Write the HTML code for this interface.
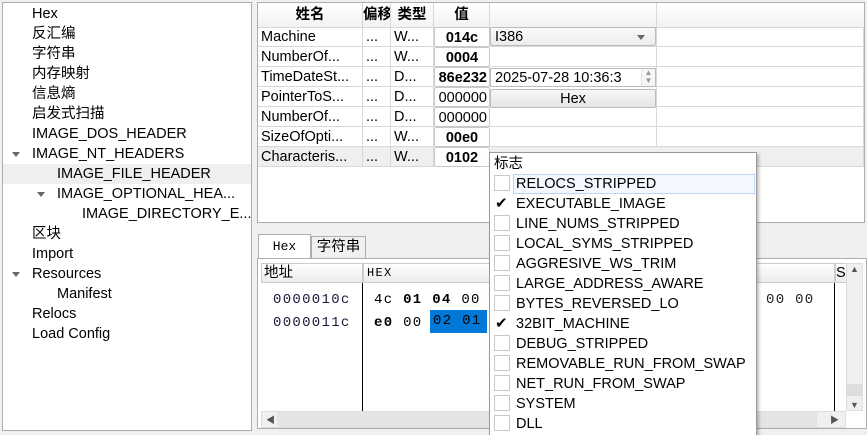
<!DOCTYPE html>
<html><head><meta charset="utf-8"><style>
*{box-sizing:border-box;margin:0;padding:0}
html{overflow:hidden;width:867px;height:435px}
body{width:867px;height:435px;background:#f0f0f0;position:relative;overflow:hidden;font-family:"Segoe UI","Liberation Sans","Noto Sans CJK SC",sans-serif;font-size:14.5px;color:#000}
.a{position:absolute}
.tree{left:2px;top:2px;width:250px;height:429px;background:#fff;border:1px solid #adadad}
.ti{position:absolute;height:20px;line-height:20px;white-space:nowrap}
.arr{position:absolute;width:0;height:0;border-left:4px solid transparent;border-right:4px solid transparent;border-top:5px solid #666}
.tbl{left:257px;top:2px;width:608px;height:221px;background:#fff;border:1px solid #adadad;overflow:hidden}
.c{position:absolute;height:20px;line-height:21px;border-right:1px solid #d8d8d8;border-bottom:1px solid #d8d8d8;white-space:nowrap;overflow:hidden;padding-left:3px}
.h{background:linear-gradient(#fff,#f2f2f2);font-weight:bold;text-align:center;padding:0;line-height:24px;height:25px}
.val{font-weight:bold;text-align:center;padding:0;background:#fff;border:1px solid #c8c8c8;border-radius:2px}
.btn{position:absolute;background:linear-gradient(#f6f6f6,#e6e6e6);border:1px solid #bbb;border-radius:2px;height:19px;line-height:19px}
.mono{font-family:"Liberation Mono",monospace;font-size:14px;letter-spacing:1.3px}
.pop{left:489px;top:152px;width:268px;height:284px;background:#fff;border:1px solid #999;border-bottom:none;box-shadow:2px 2px 3px rgba(0,0,0,.25)}
.cb{position:absolute;left:4px;width:16px;height:16px;border:1px solid #c8c8c8;background:#fff}
.ck{position:absolute;left:5px;font-size:15px;line-height:16px}
.pl{position:absolute;left:26px;height:20px;line-height:22px;white-space:nowrap}
</style></head><body>
<div class="a tree">
<div class="ti" style="left:29px;top:1px">Hex</div>
<div class="ti" style="left:29px;top:21px">反汇编</div>
<div class="ti" style="left:29px;top:41px">字符串</div>
<div class="ti" style="left:29px;top:61px">内存映射</div>
<div class="ti" style="left:29px;top:81px">信息熵</div>
<div class="ti" style="left:29px;top:101px">启发式扫描</div>
<div class="ti" style="left:29px;top:121px">IMAGE_DOS_HEADER</div>
<div class="arr" style="left:9px;top:149px"></div>
<div class="ti" style="left:29px;top:141px">IMAGE_NT_HEADERS</div>
<div class="a" style="left:0;top:161px;width:248px;height:20px;background:#efefef"></div>
<div class="ti" style="left:54px;top:161px">IMAGE_FILE_HEADER</div>
<div class="arr" style="left:34px;top:189px"></div>
<div class="ti" style="left:54px;top:181px">IMAGE_OPTIONAL_HEA...</div>
<div class="ti" style="left:79px;top:201px">IMAGE_DIRECTORY_E...</div>
<div class="ti" style="left:29px;top:221px">区块</div>
<div class="ti" style="left:29px;top:241px">Import</div>
<div class="arr" style="left:9px;top:269px"></div>
<div class="ti" style="left:29px;top:261px">Resources</div>
<div class="ti" style="left:54px;top:281px">Manifest</div>
<div class="ti" style="left:29px;top:301px">Relocs</div>
<div class="ti" style="left:29px;top:321px">Load Config</div>
</div>

<div class="a tbl">
<div class="c h" style="left:0;top:0;width:105px">姓名</div>
<div class="c h" style="left:105px;top:0;width:28px;text-align:left">偏移</div>
<div class="c h" style="left:133px;top:0;width:43px">类型</div>
<div class="c h" style="left:176px;top:0;width:56px">值</div>
<div class="c h" style="left:232px;top:0;width:167px"></div>
<div class="c h" style="left:399px;top:0;width:210px"></div>
</div>
<div class="a" style="left:258px;top:27px;width:606px">
<div class="c" style="left:0;top:0;width:105px">Machine</div><div class="c" style="left:105px;top:0;width:28px">...</div><div class="c" style="left:133px;top:0;width:43px">W...</div><div class="c val" style="left:176px;top:0;width:56px">014c</div><div class="c" style="left:232px;top:0;width:167px"></div><div class="c" style="left:399px;top:0;width:207px"></div>
<div class="c" style="left:0;top:20px;width:105px">NumberOf...</div><div class="c" style="left:105px;top:20px;width:28px">...</div><div class="c" style="left:133px;top:20px;width:43px">W...</div><div class="c val" style="left:176px;top:20px;width:56px">0004</div><div class="c" style="left:232px;top:20px;width:167px"></div><div class="c" style="left:399px;top:20px;width:207px"></div>
<div class="c" style="left:0;top:40px;width:105px">TimeDateSt...</div><div class="c" style="left:105px;top:40px;width:28px">...</div><div class="c" style="left:133px;top:40px;width:43px">D...</div><div class="c val" style="left:176px;top:40px;width:56px;text-align:right;padding-right:2px">86e232</div><div class="c" style="left:232px;top:40px;width:167px"></div><div class="c" style="left:399px;top:40px;width:207px"></div>
<div class="c" style="left:0;top:60px;width:105px">PointerToS...</div><div class="c" style="left:105px;top:60px;width:28px">...</div><div class="c" style="left:133px;top:60px;width:43px">D...</div><div class="c val" style="left:176px;top:60px;width:56px;font-weight:normal;text-align:right;padding-right:2px">000000</div><div class="c" style="left:232px;top:60px;width:167px"></div><div class="c" style="left:399px;top:60px;width:207px"></div>
<div class="c" style="left:0;top:80px;width:105px">NumberOf...</div><div class="c" style="left:105px;top:80px;width:28px">...</div><div class="c" style="left:133px;top:80px;width:43px">D...</div><div class="c val" style="left:176px;top:80px;width:56px;font-weight:normal;text-align:right;padding-right:2px">000000</div><div class="c" style="left:232px;top:80px;width:167px"></div><div class="c" style="left:399px;top:80px;width:207px"></div>
<div class="c" style="left:0;top:100px;width:105px">SizeOfOpti...</div><div class="c" style="left:105px;top:100px;width:28px">...</div><div class="c" style="left:133px;top:100px;width:43px">W...</div><div class="c val" style="left:176px;top:100px;width:56px">00e0</div><div class="c" style="left:232px;top:100px;width:167px"></div><div class="c" style="left:399px;top:100px;width:207px"></div>
<div class="c" style="left:0;top:120px;width:105px;background:#efefef">Characteris...</div><div class="c" style="left:105px;top:120px;width:28px;background:#efefef">...</div><div class="c" style="left:133px;top:120px;width:43px;background:#efefef">W...</div><div class="c val" style="left:176px;top:120px;width:56px">0102</div><div class="c" style="left:232px;top:120px;width:374px;background:#efefef"></div>
</div>
<div class="btn" style="left:490px;top:27px;width:166px;padding-left:4px;background:linear-gradient(#fafafa,#ececec)">I386<span class="arr" style="left:146px;top:7px"></span></div>
<div class="a" style="left:490px;top:68px;width:166px;height:19px;background:#fff;border:1px solid #bbb;line-height:18px;padding-left:4px;overflow:hidden;white-space:nowrap">2025-07-28 10:36:3<span style="position:absolute;right:0;top:0;width:14px;height:17px;background:#f6f6f6;border-left:1px solid #ddd;color:#999;font-size:8px;line-height:8px;text-align:center">▲<br>▼</span></div>
<div class="btn" style="left:490px;top:89px;width:166px;text-align:center">Hex</div>

<!-- tabs -->
<div class="a" style="left:258px;top:234px;width:53px;height:25px;background:#fff;border:1px solid #adadad;border-bottom:none;text-align:center;line-height:24px;font-family:'Liberation Mono',monospace;font-size:13px">Hex</div>
<div class="a" style="left:311px;top:236px;width:55px;height:22px;background:#f0f0f0;border:1px solid #adadad;border-bottom:none;text-align:center;line-height:21px">字符串</div>
<div class="a" style="left:257px;top:258px;width:610px;height:171px;background:#fff;border:1px solid #adadad">
<div class="a" style="left:3px;top:4px;width:102px;height:20px;background:linear-gradient(#fff,#ececec);border:1px solid #ccc;line-height:18px;padding-left:2px">地址</div>
<div class="a mono" style="left:105px;top:4px;width:472px;height:20px;background:linear-gradient(#fff,#ececec);border:1px solid #ccc;line-height:18px;padding-left:3px;font-size:12px">HEX</div>
<div class="a" style="left:577px;top:4px;width:12px;height:20px;background:linear-gradient(#fff,#ececec);border:1px solid #ccc;line-height:18px;overflow:hidden">S</div>
<div class="a" style="left:104px;top:24px;width:1px;height:128px;background:#000"></div>
<div class="a" style="left:576px;top:24px;width:1px;height:128px;background:#000"></div>
<div class="a mono" style="left:15px;top:33px;color:#1a1a3a">0000010c</div>
<div class="a mono" style="left:15px;top:56px;color:#1a1a3a">0000011c</div>
<div class="a mono" style="left:116px;top:33px">4c <b>01</b> <b>04</b> 00 3</div>
<div class="a mono" style="left:116px;top:56px"><b>e0</b> 00 </div>
<div class="a mono" style="left:172px;top:51px;width:57px;height:23px;background:#0078d7;line-height:23px;padding-left:3px">02 01</div>
<div class="a mono" style="left:508px;top:33px;color:#222">00 00</div>
<div class="a" style="left:588px;top:4px;width:17px;height:148px;background:#f0f0f0;border:1px solid #ddd"><div style="text-align:center;font-size:9px;color:#555">▲</div><div style="position:absolute;bottom:14px;left:0;width:15px;height:12px;background:#ddd"></div><div style="position:absolute;bottom:0;width:15px;text-align:center;font-size:9px;color:#555">▼</div></div>
<div class="a" style="left:3px;top:152px;width:585px;height:17px;background:#f0f0f0;border:1px solid #ddd"><span style="position:absolute;left:4px;top:1px;font-size:9px;color:#555">◀</span><div style="position:absolute;left:15px;top:0;width:540px;height:15px;background:#e4e4e4"></div><span style="position:absolute;right:6px;top:1px;font-size:9px;color:#555">▶</span></div>
</div>

<!-- popup -->
<div class="a pop">
<div class="pl" style="left:4px;top:0">标志</div>
<div class="a" style="left:23px;top:21px;width:242px;height:20px;border:1px solid #b8d8f5;background:#f3f9ff"></div>
<div class="cb" style="top:22px"></div><div class="pl" style="top:20px">RELOCS_STRIPPED</div>
<div class="ck" style="top:43px">✔</div><div class="pl" style="top:40px">EXECUTABLE_IMAGE</div>
<div class="cb" style="top:62px"></div><div class="pl" style="top:60px">LINE_NUMS_STRIPPED</div>
<div class="cb" style="top:82px"></div><div class="pl" style="top:80px">LOCAL_SYMS_STRIPPED</div>
<div class="cb" style="top:102px"></div><div class="pl" style="top:100px">AGGRESIVE_WS_TRIM</div>
<div class="cb" style="top:122px"></div><div class="pl" style="top:120px">LARGE_ADDRESS_AWARE</div>
<div class="cb" style="top:142px"></div><div class="pl" style="top:140px">BYTES_REVERSED_LO</div>
<div class="ck" style="top:163px">✔</div><div class="pl" style="top:160px">32BIT_MACHINE</div>
<div class="cb" style="top:182px"></div><div class="pl" style="top:180px">DEBUG_STRIPPED</div>
<div class="cb" style="top:202px"></div><div class="pl" style="top:200px">REMOVABLE_RUN_FROM_SWAP</div>
<div class="cb" style="top:222px"></div><div class="pl" style="top:220px">NET_RUN_FROM_SWAP</div>
<div class="cb" style="top:242px"></div><div class="pl" style="top:240px">SYSTEM</div>
<div class="cb" style="top:262px"></div><div class="pl" style="top:260px">DLL</div>
</div>
</body></html>
